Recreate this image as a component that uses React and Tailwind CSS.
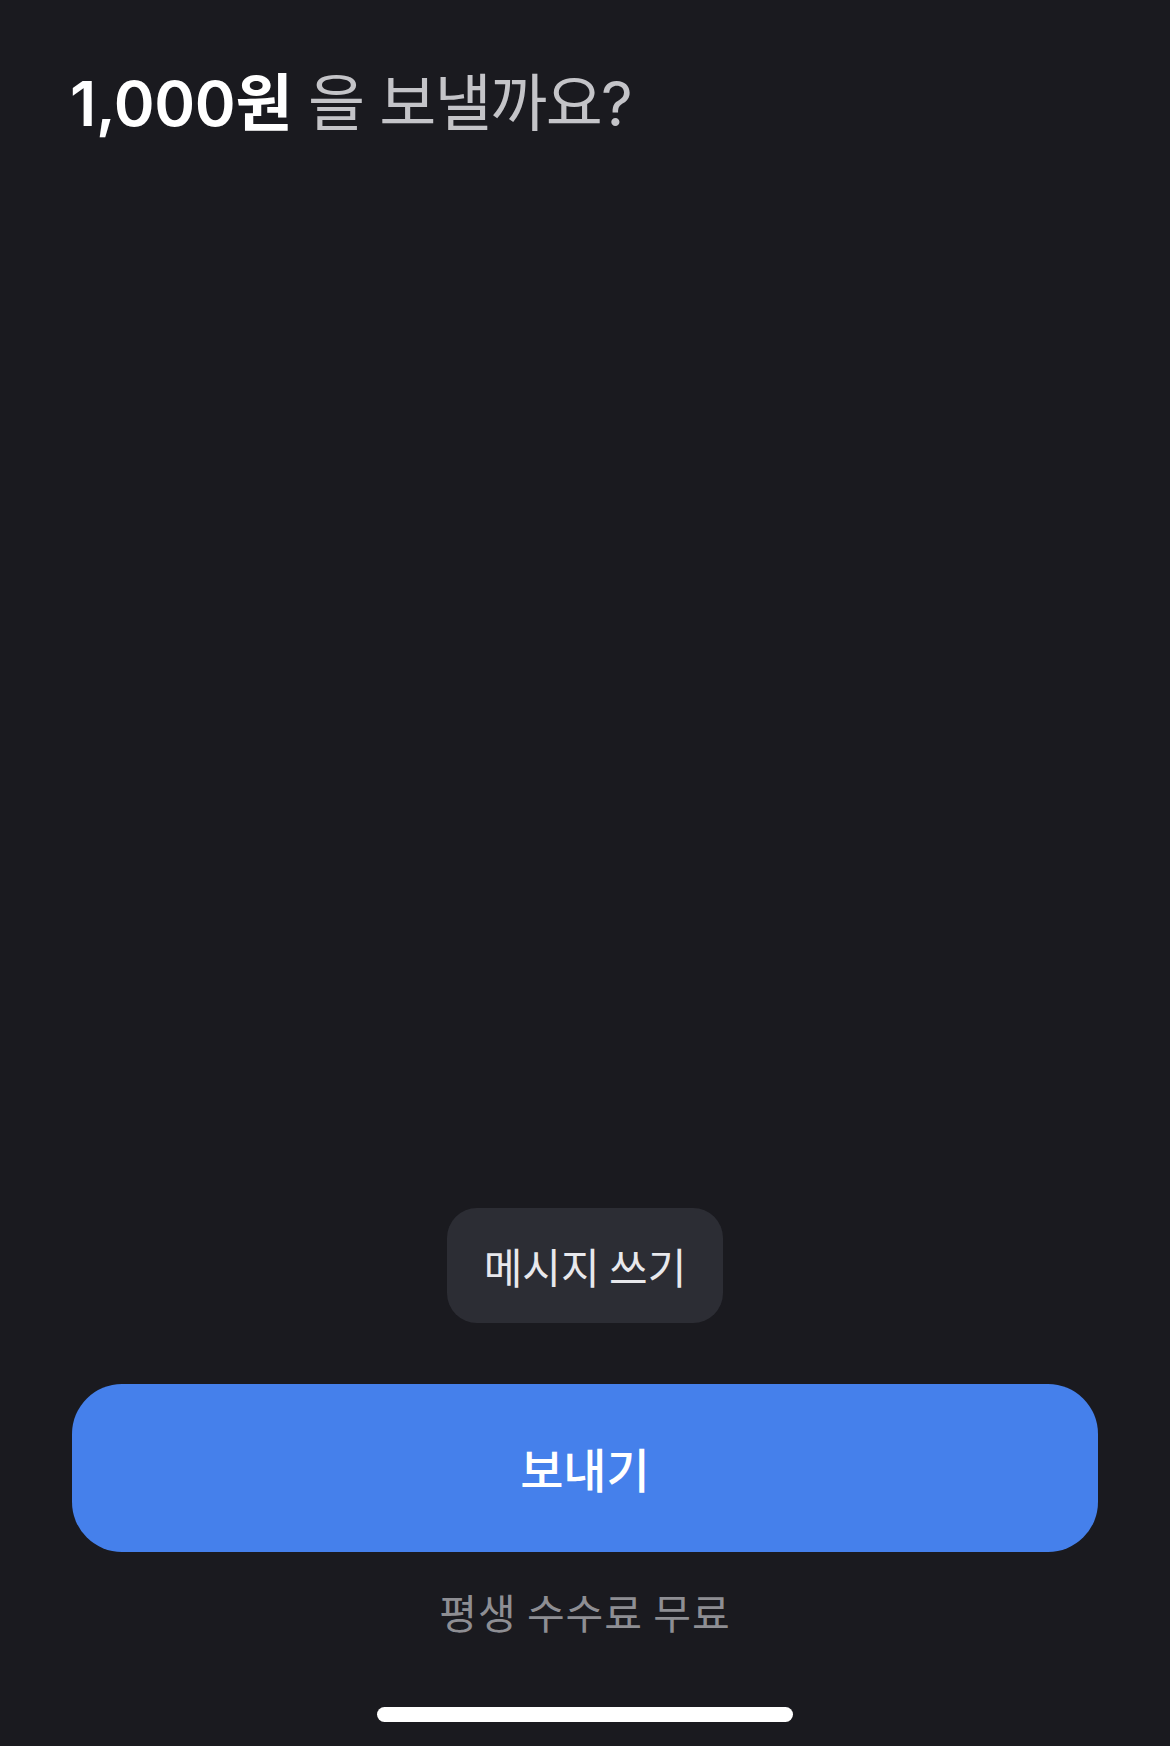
import React from 'react';

const font = { fontFamily: '"Noto Sans CJK KR", "Noto Sans", sans-serif' };
const titleFont = { fontFamily: 'Inter, "Noto Sans CJK KR", sans-serif' };

const App = () => {
  return (
    <div className="h-[1746px] w-full bg-[#1a1a1f] flex flex-col" style={font}>
      {/* Title */}
      <h1 className="pl-[70px] pt-[66px] text-[62px] leading-[76px]" style={titleFont}>
        <span className="font-semibold text-white tracking-[-0.3px]">1,000원</span>
        <span className="text-[#c4c4c8] font-normal tracking-[-1.6px]"> 을 보낼까요?</span>
      </h1>

      <div className="flex-1" />

      {/* Message chip */}
      <div className="flex justify-center">
        <button className="h-[115px] w-[276px] rounded-[30px] bg-[#2c2d34] text-[42px] text-[#e8e8ec] flex items-center justify-center">
          메시지 쓰기
        </button>
      </div>

      {/* Send */}
      <div className="px-[72px] mt-[61px]">
        <button className="w-full h-[168px] rounded-[50px] bg-[#4580eb] text-white text-[47px] font-medium flex items-center justify-center">
          보내기
        </button>
      </div>

      <p className="mt-[34px] text-center text-[41px] leading-[50px] tracking-[1px] text-[#8e8e93]">평생 수수료 무료</p>

      {/* Home indicator */}
      <div className="flex justify-center mt-[71px] mb-[24px]">
        <div className="w-[416px] h-[15px] rounded-full bg-white" />
      </div>
    </div>
  );
};

export default App;
